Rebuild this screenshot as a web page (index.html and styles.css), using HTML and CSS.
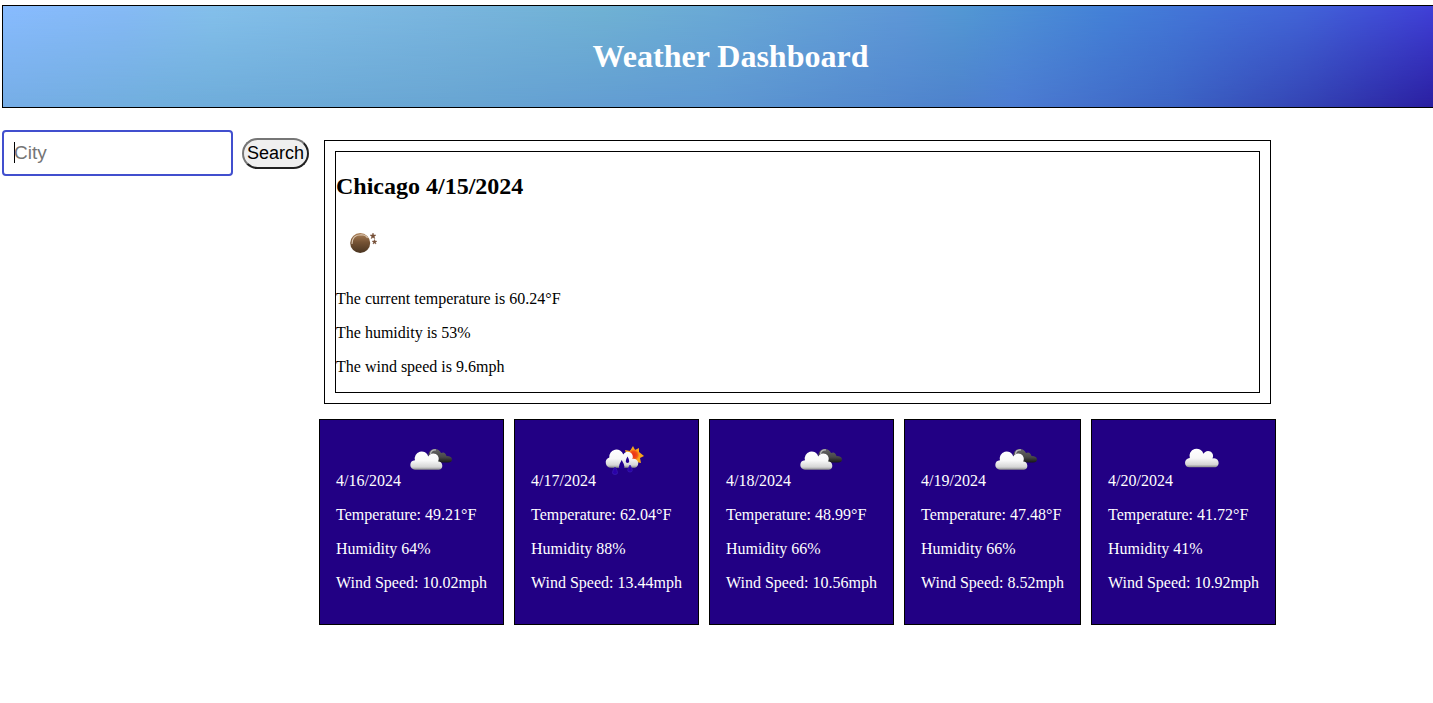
FILE: index.html
```html
<!DOCTYPE html>
<html lang="en">
<head>
<meta charset="utf-8">
<title>Weather Dashboard</title>
<link rel="stylesheet" href="styles.css">
</head>
<body>
<svg class="defs" width="0" height="0" aria-hidden="true">
  <defs>
    <linearGradient id="white" x1="0" y1="0" x2="0" y2="1"><stop offset="0" stop-color="#fff"/><stop offset=".5" stop-color="#f8f8f8"/><stop offset=".85" stop-color="#d5d5d5"/><stop offset="1" stop-color="#888"/></linearGradient>
    <linearGradient id="dark" x1="0" y1="0" x2="0" y2="1"><stop offset="0" stop-color="#666"/><stop offset=".6" stop-color="#484848"/><stop offset="1" stop-color="#171717"/></linearGradient>
    <linearGradient id="brown" x1="0" y1="0" x2="0" y2="1"><stop offset="0" stop-color="#ac8158"/><stop offset=".45" stop-color="#765334"/><stop offset="1" stop-color="#493420"/></linearGradient>
    <radialGradient id="sun"><stop offset="0" stop-color="#e92c16"/><stop offset=".65" stop-color="#ef4d17"/><stop offset="1" stop-color="#ff8a18"/></radialGradient>
    <symbol id="broken" viewBox="0 0 50 50">
      <path fill="url(#dark)" d="M24 24C22 17 25 13 30 13Q34 13 36 17Q40 15 41.500 20Q47 20 47 23.500Q47 26.500 43 26.500H30Z"/>
      <path fill="none" stroke="#b9b9bd" stroke-width="1.200" d="M25.500 18Q26 13.500 31 14"/>
      <path fill="url(#white)" d="M10 33.800A4.800 4.800 0 0 1 5.300 29A5 5 0 0 1 10 24.200A6.900 6.900 0 0 1 23.300 20.500A5.300 5.300 0 0 1 33.200 25.500A4.200 4.200 0 0 1 34 33.800Z"/>
    </symbol>
    <symbol id="rain" viewBox="0 0 50 50">
      <path fill="#f7a51a" d="m33 10 2 4 4-2v4l5 4-4 2 1 5-5-1-3 3-3-4-5-1 2-4-2-6 5 1Z"/>
      <circle cx="33.500" cy="19" r="5.500" fill="url(#sun)"/>
      <path fill="url(#white)" d="M11 31.800A5.300 5.300 0 0 1 9.300 21.500A7.200 7.200 0 0 1 23.300 18.500A4.800 4.800 0 0 1 32.300 23A4.600 4.600 0 0 1 35 31.800Z"/>
      <path fill="#220090" d="M27.500 20.500q3.500 6 0 6.500q-3.500-.5 0-6.500ZM21.700 24q5.500 9 0 9.500q-5.500-.5 0-9.500Z"/>
      <path fill="#2a00a8" stroke="#3a1cb4" stroke-width=".7" d="M15 31q5 7.500 0 7.500q-5 0 0-7.500ZM30 29q4.500 7 0 7q-4.500 0 0-7Z"/>
    </symbol>
    <symbol id="cloud" viewBox="0 0 50 50">
      <path fill="url(#white)" d="M12.500 31.300A4.700 4.700 0 0 1 8 27A5 5 0 0 1 12.800 22A7.100 7.100 0 0 1 26.500 17.700A5.100 5.100 0 0 1 35.500 22.500A4.500 4.500 0 0 1 38.500 31.300Z"/>
    </symbol>
  </defs>
</svg>

<header class="header"><h1>Weather Dashboard</h1></header>

<div class="layout">
  <form class="search">
    <label class="city-field"><span class="placeholder">City</span></label>
    <button class="search-button" type="button">Search</button>
  </form>
  <main class="results">
    <section class="current">
      <div class="current-inner">
        <h2>Chicago 4/15/2024</h2>
        <div class="current-icon">
          <svg class="icon" viewBox="0 0 50 50">
            <circle cx="24.200" cy="24" r="10" fill="url(#brown)"/>
            <path fill="none" stroke="#d9c4ae" stroke-width="1.100" d="M16 25Q16 16 25 15.800Q30 16 31.500 19"/>
            <path fill="#765038" stroke="#765038" stroke-width=".5" d="m37 14 .7 2 2.200.1-1.700 1.400.6 2.100-1.800-1.200-1.800 1.200.6-2.100-1.700-1.400 2.200-.1ZM38.500 20.500l.6 1.600 1.800.1-1.400 1.100.5 1.700-1.500-1-1.500 1 .5-1.700-1.400-1.100 1.800-.1Z"/>
          </svg>
        </div>
        <p>The current temperature is 60.24°F</p>
        <p>The humidity is 53%</p>
        <p>The wind speed is 9.6mph</p>
      </div>
    </section>
    <section class="forecast">
      <article class="card"><div>4/16/2024 <svg class="icon"><use href="#broken"/></svg></div><p>Temperature: 49.21°F</p><p>Humidity 64%</p><p>Wind Speed: 10.02mph</p></article>
      <article class="card"><div>4/17/2024 <svg class="icon"><use href="#rain"/></svg></div><p>Temperature: 62.04°F</p><p>Humidity 88%</p><p>Wind Speed: 13.44mph</p></article>
      <article class="card"><div>4/18/2024 <svg class="icon"><use href="#broken"/></svg></div><p>Temperature: 48.99°F</p><p>Humidity 66%</p><p>Wind Speed: 10.56mph</p></article>
      <article class="card"><div>4/19/2024 <svg class="icon"><use href="#broken"/></svg></div><p>Temperature: 47.48°F</p><p>Humidity 66%</p><p>Wind Speed: 8.52mph</p></article>
      <article class="card"><div>4/20/2024 <svg class="icon"><use href="#cloud"/></svg></div><p>Temperature: 41.72°F</p><p>Humidity 41%</p><p>Wind Speed: 10.92mph</p></article>
    </section>
  </main>
</div>
</body>
</html>
```

FILE: styles.css
```css
* { box-sizing: border-box; }
html { overflow: hidden; }
body {
  margin: 0;
  padding: 5px 0 0 2px;
  overflow: hidden;
  background: #fff;
  color: #000;
  font: 16px/18px "Liberation Serif", "Times New Roman", serif;
}
.defs { position: absolute; }
.header {
  display: grid;
  width: 1457px;
  height: 103px;
  border: 1px solid #000;
  color: #fff;
  text-align: center;
  background: linear-gradient(90deg, #88bcff 0, #86baf6 120px, #84c0eb 210px, #7ab6df 440px, #70b2d4 600px, #6aaad6 713px, #5e98d8 900px, #5398d4 960px, #4482d8 1100px, #4264d8 1300px, #4040d8 1430px);
}
/* Darker tones fade in toward the bottom edge. */
.header::before {
  content: "";
  grid-area: 1 / 1;
  background: linear-gradient(90deg, #76ade6 0, #70aedc 150px, #68a5d2 450px, #5e98d2 713px, #4e82cc 950px, #4c7cd2 1010px, #3c64c4 1170px, #3444b4 1300px, #2a1fa0 1430px);
  mask-image: linear-gradient(to bottom, transparent, #000);
}
h1 { grid-area: 1 / 1; z-index: 1; margin: 32px 0 0; font-size: 32px; line-height: 37px; }
.layout { display: flex; align-items: flex-start; }
.search { display: flex; align-items: center; gap: 9px; width: 317px; margin-top: 22px; }
.city-field {
  display: flex;
  align-items: center;
  width: 231px;
  height: 46px;
  padding-left: 10px;
  border: 2px solid #414fce;
  border-radius: 4px;
  color: #757575;
  font: 19px/21px "Liberation Sans", Arial, sans-serif;
}
.placeholder { border-left: 1px solid #000; margin-bottom: 2px; text-indent: -1px; }
.search-button {
  width: 67px;
  height: 31px;
  padding: 0;
  border: 2px solid;
  border-color: #767676 #212121 #212121 #767676;
  border-radius: 16px;
  background: #efefef;
  color: #000;
  font: 18px/21px "Liberation Sans", Arial, sans-serif;
}
.results { width: 957px; padding-top: 32px; }
.current { height: 264px; margin: 0 5px 15px; padding: 10px; border: 1px solid #000; }
.current-inner { height: 242px; border: 1px solid #000; }
h2 { margin: 21px 0 19px; font-size: 24px; line-height: 27px; }
p { margin: 16px 0 0; white-space: nowrap; }
.icon { width: 50px; height: 50px; vertical-align: baseline; }
.current-icon { height: 55px; }
.forecast { display: grid; grid-template-columns: 185px 185px 185px 177px 185px; gap: 10px; }
.card { height: 206px; padding: 16px; border: 1px solid #000; background: #220084; color: #fff; }
.card div { height: 54px; white-space: nowrap; }
```
